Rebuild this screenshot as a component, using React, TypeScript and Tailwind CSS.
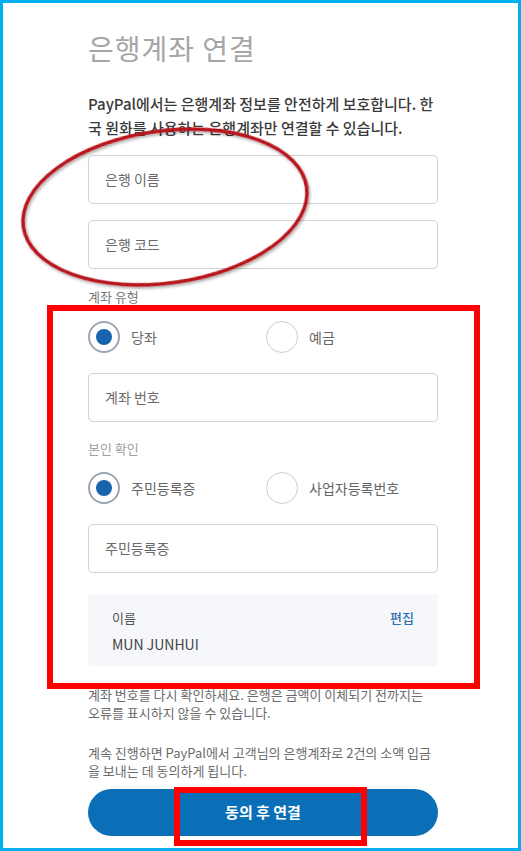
import React from "react";

const font = { fontFamily: '"Noto Sans CJK KR", "Noto Sans", sans-serif' };

function Input({ label }: { label: string }) {
  return (
    <div className="h-[49px] w-full rounded-[5px] border border-[#d3d3d3] bg-white flex items-center pl-4 text-[14px] text-[#6a6a6a] shadow-[0_0_1px_rgba(0,0,0,0.08)]">
      {label}
    </div>
  );
}

function Radio({ label, checked }: { label: string; checked?: boolean }) {
  return (
    <div className="flex items-center gap-[11px]">
      {checked ? (
        <div className="w-[32px] h-[32px] rounded-full border-[2px] border-[#9aa6b4] bg-white flex items-center justify-center">
          <div className="w-[16px] h-[16px] rounded-full bg-[#1763ad]" />
        </div>
      ) : (
        <div className="w-[32px] h-[32px] rounded-full border border-[#cfcfcf] bg-white" />
      )}
      <span className="text-[14px] text-[#666]">{label}</span>
    </div>
  );
}

export default function App() {
  return (
    <div
      className="relative w-[521px] h-[851px] border-[3px] border-[#00b0f0] bg-white overflow-hidden"
      style={font}
    >
      <div className="flex flex-col pl-[85px] w-[435px] pt-[27px]">
        <h1 className="text-[28px] leading-[36px] text-[#a6a6a6] font-normal tracking-[1px]">
          은행계좌 연결
        </h1>
        <p className="mt-[26px] text-[15px] leading-[24px] text-[#3a3a3a] font-medium whitespace-nowrap">
          PayPal에서는 은행계좌 정보를 안전하게 보호합니다. 한
          <br />
          국 원화를 사용하는 은행계좌만 연결할 수 있습니다.
        </p>
        <div className="mt-[15px]">
          <Input label="은행 이름" />
        </div>
        <div className="mt-[16px]">
          <Input label="은행 코드" />
        </div>
        <div className="mt-[18px] text-[13px] leading-[20px] text-[#7a7a7a]">계좌 유형</div>
        <div className="mt-[14px] flex">
          <div className="w-[178px]">
            <Radio label="당좌" checked />
          </div>
          <Radio label="예금" />
        </div>
        <div className="mt-[20px]">
          <Input label="계좌 번호" />
        </div>
        <div className="mt-[17px] text-[13px] leading-[20px] text-[#a0a0a0]">본인 확인</div>
        <div className="mt-[13px] flex">
          <div className="w-[178px]">
            <Radio label="주민등록증" checked />
          </div>
          <Radio label="사업자등록번호" />
        </div>
        <div className="mt-[20px]">
          <Input label="주민등록증" />
        </div>
        <div className="mt-[21px] h-[72px] rounded-[4px] bg-[#f5f7fa] flex justify-between px-6 pt-[14px]">
          <div className="flex flex-col">
            <span className="text-[13px] leading-[20px] text-[#555]">이름</span>
            <span className="mt-[6px] text-[14px] leading-[20px] text-[#444]">
              MUN JUNHUI
            </span>
          </div>
          <span className="text-[13px] leading-[20px] text-[#2d6fb4] font-medium">편집</span>
        </div>
        <p className="mt-[20px] text-[13px] leading-[18px] text-[#6b6b6b] whitespace-nowrap">
          계좌 번호를 다시 확인하세요. 은행은 금액이 이체되기 전까지는
          <br />
          오류를 표시하지 않을 수 있습니다.
        </p>
        <p className="mt-[22px] text-[13px] leading-[18px] text-[#6b6b6b] whitespace-nowrap">
          계속 진행하면 PayPal에서 고객님의 은행계좌로 2건의 소액 입금
          <br />을 보내는 데 동의하게 됩니다.
        </p>
        <button className="mt-[9px] h-[47px] w-full rounded-full bg-[#0b6fb7] text-white text-[15px] font-bold flex items-center justify-center">
          동의 후 연결
        </button>
      </div>

      {/* annotations */}
      <div className="absolute left-[44px] top-[302px] w-[433px] h-[384px] border-[6px] border-[#ff0000]" />
      <div className="absolute left-[171px] top-[784px] w-[193px] h-[59px] border-[6px] border-[#ff0000]" />
      <svg
        className="absolute left-[-3px] top-[-3px] pointer-events-none"
        width="521"
        height="851"
        viewBox="0 0 521 851"
      >
        <defs>
          <filter id="sh" x="-20%" y="-20%" width="140%" height="140%">
            <feGaussianBlur in="SourceAlpha" stdDeviation="1.5" />
            <feOffset dx="1" dy="2" result="b" />
            <feComponentTransfer>
              <feFuncA type="linear" slope="0.35" />
            </feComponentTransfer>
            <feMerge>
              <feMergeNode />
              <feMergeNode in="SourceGraphic" />
            </feMerge>
          </filter>
        </defs>
        <ellipse
          cx="165"
          cy="207"
          rx="143"
          ry="76"
          transform="rotate(-8 165 207)"
          fill="none"
          stroke="#b8161e"
          strokeWidth="3.5"
          filter="url(#sh)"
        />
      </svg>
    </div>
  );
}
